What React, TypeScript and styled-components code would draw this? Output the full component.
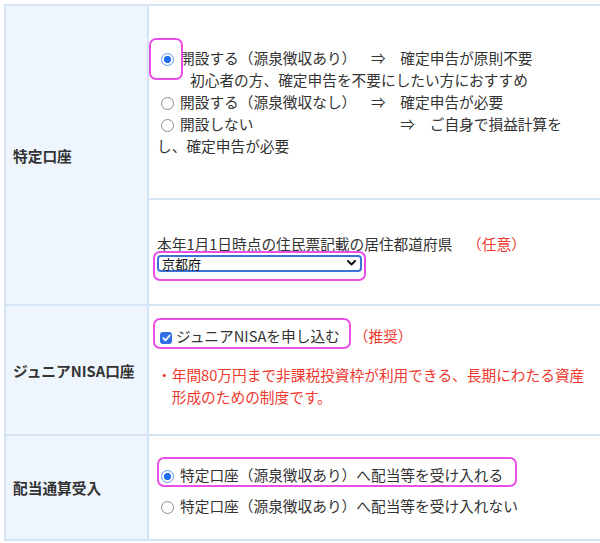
import styled, { createGlobalStyle } from "styled-components";

const GlobalStyle = createGlobalStyle`
  html, body {
    margin: 0;
    padding: 0;
    overflow: hidden;
    background: #ffffff;
  }
  body {
    font-family: "Noto Sans CJK JP", "Noto Sans", sans-serif;
    font-size: 14.7px;
    color: #333333;
    text-spacing-trim: space-all;
  }
`;

const Form = styled.div`
  display: grid;
  grid-template-columns: 141px 1fr;
  grid-template-rows: 192px 104px 128px 103px;
  gap: 2px;
  padding: 2px;
  margin: 4px 0 0 4px;
  width: 620px;
  box-sizing: border-box;
  background: #d5e4f4;
`;

const Label = styled.div<{ $span?: number }>`
  grid-row: span ${(p) => p.$span ?? 1};
  display: flex;
  align-items: center;
  padding-left: 7px;
  background: #eef5fd;
  font-weight: 700;
  color: #333333;
`;

const Field = styled.div<{ $padTop?: number }>`
  display: flex;
  flex-direction: column;
  justify-content: center;
  padding: ${(p) => p.$padTop ?? 0}px 10px 0 8px;
  background: #ffffff;
  line-height: 22px;
`;

const Line = styled.div<{ $indent?: number; $gap?: number }>`
  white-space: nowrap;
  padding-left: ${(p) => p.$indent ?? 0}px;
  margin-top: ${(p) => p.$gap ?? 0}px;
`;

const Highlight = styled.span<{ $t: number; $r: number; $b: number; $l: number }>`
  position: relative;
  display: inline-block;
  vertical-align: top;
  align-self: flex-start;

  &::after {
    content: "";
    position: absolute;
    top: ${(p) => -p.$t}px;
    right: ${(p) => -p.$r}px;
    bottom: ${(p) => -p.$b}px;
    left: ${(p) => -p.$l}px;
    border: 2px solid #e94fe6;
    border-radius: 7px;
    pointer-events: none;
  }
`;

const Radio = styled.span<{ $checked?: boolean }>`
  display: inline-block;
  width: 13px;
  height: 13px;
  box-sizing: border-box;
  margin: 0 6px 0 4px;
  vertical-align: -2px;
  border-radius: 50%;
  border: ${(p) => (p.$checked ? "1.5px solid #5d97ef" : "1px solid #8c8c8c")};
  background: ${(p) =>
    p.$checked
      ? "radial-gradient(circle, #1f6ff0 0 3.3px, #ffffff 3.9px)"
      : "#ffffff"};
`;

const Checkbox = styled.span`
  display: inline-flex;
  align-items: center;
  justify-content: center;
  width: 12px;
  height: 12px;
  margin: 0 4px 0 3px;
  border-radius: 3px;
  background: #2f6fe6;
`;

const Red = styled.span<{ $gap?: number }>`
  color: #ee3a30;
  margin-left: ${(p) => p.$gap ?? 0}px;
`;

const Note = styled.p`
  margin: 17px 0 8px;
  padding-left: 1em;
  text-indent: -1em;
  color: #ee3a30;
  white-space: nowrap;
`;

const Select = styled.div`
  display: flex;
  align-items: center;
  justify-content: space-between;
  width: 205px;
  height: 17px;
  box-sizing: border-box;
  padding: 0 4px 0 3px;
  border: 2px solid #3a72d8;
  border-radius: 4px;
  background: #ffffff;
  font-size: 13px;
  line-height: 1;
  color: #111111;
`;

function Chevron() {
  return (
    <svg width="9" height="6" viewBox="0 0 9 6">
      <polyline
        points="1,1 4.5,4.5 8,1"
        fill="none"
        stroke="#111111"
        strokeWidth="2"
        strokeLinecap="round"
        strokeLinejoin="round"
      />
    </svg>
  );
}

function Check() {
  return (
    <svg width="9" height="8" viewBox="0 0 9 8">
      <polyline
        points="1.3,4.2 3.5,6.3 7.7,1.5"
        fill="none"
        stroke="#ffffff"
        strokeWidth="1.8"
        strokeLinecap="round"
        strokeLinejoin="round"
      />
    </svg>
  );
}

export default function App() {
  return (
    <>
      <GlobalStyle />
      <Form>
        <Label $span={2}>特定口座</Label>
        <Field>
          <Line>
            <Highlight $t={9} $r={3} $b={11} $l={8}>
              <Radio $checked />
            </Highlight>
            開設する（源泉徴収あり）　⇒　確定申告が原則不要
          </Line>
          <Line $indent={33}>初心者の方、確定申告を不要にしたい方におすすめ</Line>
          <Line>
            <Radio />
            開設する（源泉徴収なし）　⇒　確定申告が必要
          </Line>
          <Line>
            <Radio />
            開設しない　　　　　　　　　　⇒　ご自身で損益計算を
          </Line>
          <Line>し、確定申告が必要</Line>
        </Field>
        <Field>
          <Line>
            本年1月1日時点の住民票記載の居住都道府県　<Red>（任意）</Red>
          </Line>
          <Highlight $t={4} $r={4} $b={9} $l={4}>
            <Select>
              <span>京都府</span>
              <Chevron />
            </Select>
          </Highlight>
        </Field>

        <Label>ジュニアNISA口座</Label>
        <Field>
          <Line>
            <Highlight $t={7} $r={11} $b={2} $l={4}>
              <Checkbox>
                <Check />
              </Checkbox>
              ジュニアNISAを申し込む
            </Highlight>
            <Red $gap={14}>（推奨）</Red>
          </Line>
          <Note>
            ・年間80万円まで非課税投資枠が利用できる、長期にわたる資産
            <br />
            形成のための制度です。
          </Note>
        </Field>

        <Label>配当通算受入</Label>
        <Field $padTop={6}>
          <Line>
            <Highlight $t={7} $r={14} $b={1} $l={0}>
              <Radio $checked />
              特定口座（源泉徴収あり）へ配当等を受け入れる
            </Highlight>
          </Line>
          <Line $gap={9}>
            <Radio />
            特定口座（源泉徴収あり）へ配当等を受け入れない
          </Line>
        </Field>
      </Form>
    </>
  );
}
